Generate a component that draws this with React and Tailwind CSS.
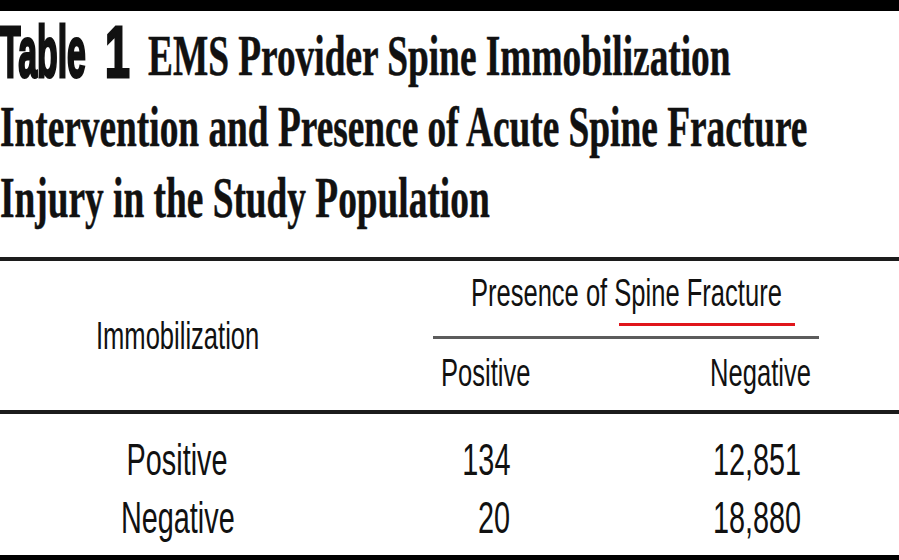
const sans = "font-['Liberation_Sans',Arial,sans-serif]";

const rows = [
  { label: 'Positive', pos: '134', neg: '12,851' },
  { label: 'Negative', pos: '20', neg: '18,880' },
];

export default function App() {
  return (
    <div className="w-[899px] h-[560px] overflow-hidden bg-white text-[#111]">
      <div className="h-[11px] bg-black" />

      {/* caption */}
      <div className="pt-[9px] whitespace-nowrap font-['Liberation_Serif','Times_New_Roman',serif] font-bold text-[57px] leading-[71px] [-webkit-text-stroke:0.5px_#111]">
        <div className="flex h-[71px]">
          <div className={`flex w-[148px] shrink-0 ${sans} text-[72px] leading-[64px] [-webkit-text-stroke:3px_#111]`}>
            <div className="w-[105px] shrink-0">
              <span className="inline-block origin-left scale-x-[0.47]">Table</span>
            </div>
            <span className="inline-block origin-left scale-x-[0.62]">1</span>
          </div>
          <div className="origin-left scale-x-[0.655]">EMS Provider Spine Immobilization</div>
        </div>
        <div className="origin-left scale-x-[0.655]">Intervention and Presence of Acute Spine Fracture</div>
        <div className="origin-left scale-x-[0.655]">Injury in the Study Population</div>
      </div>

      <div className="mt-[24px] h-[4px] bg-[#1c1c1c]" />

      {/* column heads */}
      <div className={`flex h-[149px] ${sans} text-[39px] leading-[44px] whitespace-nowrap`}>
        <div className="w-[355px] shrink-0 flex items-center justify-center">
          <span className="inline-block scale-x-[0.655]">Immobilization</span>
        </div>
        <div className="ml-[78px] w-[386px] shrink-0 pt-[10px]">
          <div className="flex justify-center">
            <span className="inline-block scale-x-[0.655]">Presence of Spine Fracture</span>
          </div>
          <div className="mt-[8px] ml-[186px] w-[176px] h-[3px] bg-[#e0161b]" />
          <div className="mt-[10px] h-[3px] bg-[#5c5c5c]" />
          <div className="mt-[12px] flex justify-between pl-[8px] pr-[8px]">
            <span className="inline-block origin-left scale-x-[0.655]">Positive</span>
            <span className="inline-block origin-right scale-x-[0.655]">Negative</span>
          </div>
        </div>
      </div>

      <div className="h-[4px] bg-[#1c1c1c]" />

      {/* body */}
      <div className={`pt-[17px] ${sans} text-[44px] leading-[58px] whitespace-nowrap`}>
        {rows.map((r) => (
          <div key={r.label} className="flex h-[58px]">
            <div className="w-[355px] shrink-0 flex justify-center">
              <span className="inline-block scale-x-[0.655]">{r.label}</span>
            </div>
            <div className="w-[155px] shrink-0 flex justify-end">
              <span className="inline-block origin-right scale-x-[0.655]">{r.pos}</span>
            </div>
            <div className="pl-[203px] flex">
              <span className="inline-block origin-left scale-x-[0.655]">{r.neg}</span>
            </div>
          </div>
        ))}
      </div>

      <div className="mt-[8px] h-[5px] bg-black" />
    </div>
  );
}
